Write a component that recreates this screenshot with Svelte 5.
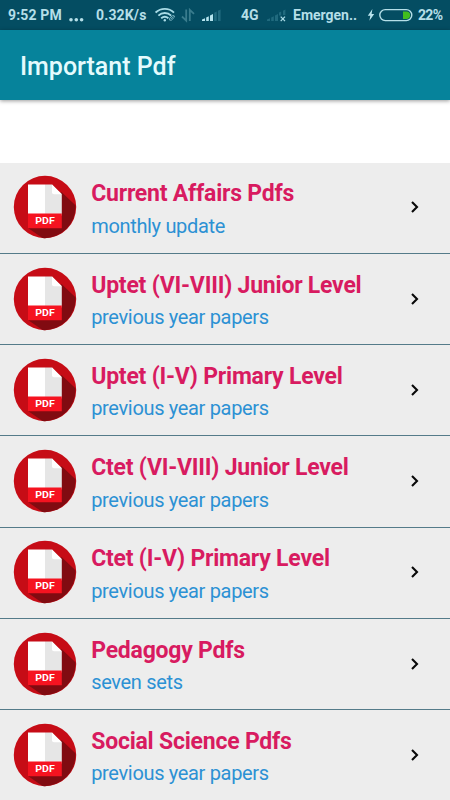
<script lang="ts">
  type PdfGroup = { title: string; subtitle: string };

  const groups: PdfGroup[] = [
    { title: 'Current Affairs Pdfs', subtitle: 'monthly update' },
    { title: 'Uptet (VI-VIII) Junior Level', subtitle: 'previous year papers' },
    { title: 'Uptet (I-V) Primary Level', subtitle: 'previous year papers' },
    { title: 'Ctet (VI-VIII) Junior Level', subtitle: 'previous year papers' },
    { title: 'Ctet (I-V) Primary Level', subtitle: 'previous year papers' },
    { title: 'Pedagogy Pdfs', subtitle: 'seven sets' },
    { title: 'Social Science Pdfs', subtitle: 'previous year papers' }
  ];
</script>

<div class="screen">
  <div class="status-bar">
    <span class="time">9:52 PM</span>
    <svg width="16" height="30" viewBox="0 0 16 30" fill="#b5dfe8">
      <circle cx="2" cy="19.7" r="1.8" />
      <circle cx="7.3" cy="19.7" r="1.8" />
      <circle cx="12.6" cy="19.7" r="1.8" />
    </svg>
    <span class="speed">0.32K/s</span>
    <svg width="22" height="30" viewBox="0 0 22 30" fill="none" stroke="#a9dbe6" stroke-width="1.9">
      <path d="M.6 12.6C5.8 7.6 13.8 7.6 19 12.6" />
      <path d="M3.4 15.6c3.7-3.4 9.1-3.4 12.8 0" />
      <path d="M6.2 18.2c2.2-1.9 5-1.9 7.2 0" />
      <circle cx="9.8" cy="20.2" r="1.2" fill="#a9dbe6" stroke="none" />
      <path d="M14.5 18.2l3-2.5q2.2-.7 2 1.4l-3.1 3.1q-2.6.8-1.9-2zM15.8 19l2.4-2.4" stroke="#78b2c1" stroke-width="1" />
    </svg>
    <svg width="15" height="30" viewBox="0 0 15 30" fill="none" stroke="#397c8d" stroke-width="1.8">
      <path d="M5.2 9.5v11.2L1 16.5" />
      <path d="M8.8 21V9.8l4.2 4.1" />
    </svg>
    <svg width="20" height="30" viewBox="0 0 20 30" fill="#b5e4ee">
      <path d="M0 21v-1.6l3-1.2V21zM4.2 21v-3.4l2.6-1.3V21zM8 21v-5.4l3-1.5V21z" />
      <path d="M12.2 21v-8.2l2.5-1.2V21zM16 21V10.8l2.6-1.4V21z" fill="#206a7e" />
    </svg>
    <span class="network">4G</span>
    <svg width="21" height="30" viewBox="0 0 21 30" fill="#206a7e">
      <path d="M0 21v-1.6l3-1.2V21zM4.2 21v-3.4l2.6-1.3V21zM8 21v-5.4l3-1.5V21zM12 15.5v-2.9l2.2-1v3.9zM16 15v-4.3l2.4-1.3V15z" />
      <path d="M13.7 16.6l4.3 4.5M18 16.6l-4.3 4.5" stroke="#a9dbe6" stroke-width="1.3" />
    </svg>
    <span class="carrier">Emergen..</span>
    <svg width="9" height="30" viewBox="0 0 9 30" fill="#b9e4ee">
      <path d="M5.4 9L.8 15.8h2.5L2.4 20.8 7.2 14H4.6z" />
    </svg>
    <svg width="35" height="30" viewBox="0 0 35 30">
      <rect x=".8" y="9.6" width="32" height="11" rx="5.5" fill="none" stroke="#b5dfe8" stroke-width="1.4" />
      <path d="M24 11.5h3.4a3.6 3.6 0 0 1 0 7.4H24z" fill="#42bd1e" />
    </svg>
    <span class="percent">22%</span>
  </div>

  <header class="app-bar">
    <h1>Important Pdf</h1>
  </header>

  <ul class="list">
    {#each groups as group}
      <li class="row">
        <svg class="pdf-icon" width="64" height="64" viewBox="0 0 64 64">
          <circle cx="32" cy="32" r="31.2" fill="#c60c16" />
          <path d="M48.5 17L62.4 30.3A31.2 31.2 0 0 1 29.5 63.1L15 53z" fill="#810b11" />
          <path d="M15 9.5h17v31H15z" fill="#fff" />
          <path d="M32 9.5h7l9.8 9.8v21.2H32z" fill="#e6e6e6" />
          <path d="M39 9.5l9.8 9.8H41q-2 0-2-2z" fill="#fff" />
          <path d="M15 38.5h33.8v14.7H15z" fill="#f51320" />
          <text x="22.3" y="49.3" textLength="19.4" lengthAdjust="spacingAndGlyphs">PDF</text>
        </svg>
        <div class="text">
          <div class="title">{group.title}</div>
          <div class="subtitle">{group.subtitle}</div>
        </div>
        <svg class="chevron" width="10" height="14" viewBox="0 0 10 14">
          <path d="M2 2l5 5-5 5" fill="none" stroke="#080808" stroke-width="2.1" />
        </svg>
      </li>
    {/each}
  </ul>
</div>

<style>
  :global(body) {
    margin: 0;
    background: #fff;
  }
  .screen {
    width: 450px;
    height: 800px;
    overflow: hidden;
    background: #fff;
    font-family: Roboto, sans-serif;
  }
  .status-bar {
    display: grid;
    grid-template-columns: 61px 27px 59px 26px 21px 39px 26px 26px 74px 12px 39px 24px;
    box-sizing: border-box;
    height: 30px;
    padding-left: 8px;
    background: #044d62;
    color: #b5dfe8;
    font-size: 14px;
    font-weight: 700;
    line-height: 31px;
    white-space: nowrap;
  }
  .time,
  .speed {
    letter-spacing: 0.15px;
  }
  .percent {
    letter-spacing: -0.7px;
  }
  .app-bar {
    display: flex;
    align-items: center;
    box-sizing: border-box;
    height: 70px;
    padding: 3px 0 0 20px;
    background: #06839b;
    box-shadow: 0 1px 4px rgba(0, 0, 0, 0.4);
  }
  h1 {
    margin: 0;
    color: #e4fbfd;
    font-size: 25px;
    font-weight: 500;
    line-height: 30px;
  }
  .list {
    margin: 62.6px 0 0;
    padding: 0;
    list-style: none;
    background: #ededed;
  }
  .row {
    display: flex;
    align-items: flex-start;
    box-sizing: border-box;
    height: 91.25px;
    padding: 12.9px 30px 0 13px;
    border-bottom: 1px solid #547b89;
  }
  .pdf-icon {
    flex: none;
  }
  .pdf-icon text {
    fill: #fff;
    font-size: 9.5px;
    font-weight: 700;
  }
  .text {
    flex: 1;
    padding: 5px 0 0 14.2px;
    white-space: nowrap;
  }
  .title {
    color: #d81b60;
    font-size: 23px;
    font-weight: 700;
    letter-spacing: -0.22px;
    line-height: 28px;
  }
  .subtitle {
    margin-top: 4.5px;
    color: #2c91d4;
    font-size: 20px;
    letter-spacing: -0.33px;
    line-height: 26px;
  }
  .chevron {
    flex: none;
    margin-top: 25px;
  }
</style>
